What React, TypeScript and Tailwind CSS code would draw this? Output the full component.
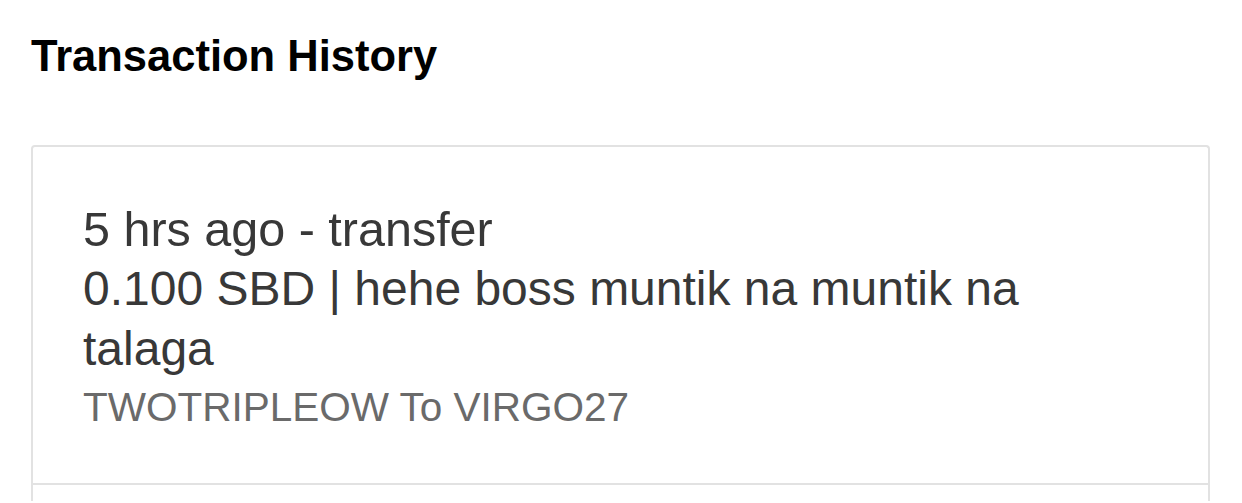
const App = () => {
  return (
    <div className="min-h-screen bg-white px-[31px] pt-[31px] font-['Liberation_Sans',Arial,sans-serif]">
      <h1 className="text-[43.5px] leading-[50px] font-bold text-black">
        Transaction History
      </h1>

      <div className="mt-[64px] w-[1179px] rounded-t-[4px] border-x-2 border-t-2 border-[#e2e2e2] bg-white">
        <div className="px-[50px] pt-[52px] pb-[48px]">
          <div className="text-[48.5px] leading-[60px] text-[#383838]">
            5 hrs ago - transfer
          </div>
          <div className="text-[48px] leading-[60px] text-[#383838]">
            0.100 SBD | hehe boss muntik na muntik na talaga
          </div>
          <div className="text-[40.5px] leading-[56px] text-[#6a6a6a]">
            TWOTRIPLEOW To VIRGO27
          </div>
        </div>
        <div className="h-[18px] border-t-2 border-[#e2e2e2]" />
      </div>
    </div>
  )
}

export default App
